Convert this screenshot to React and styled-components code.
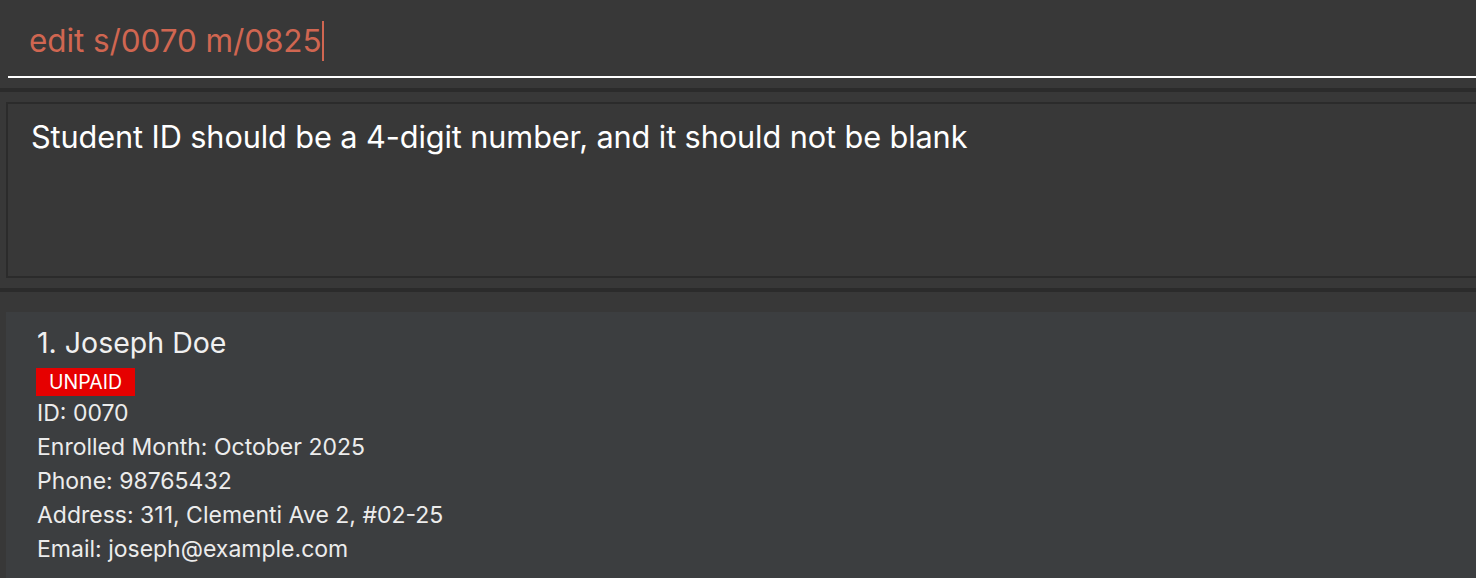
import React from 'react';
import styled, { createGlobalStyle } from 'styled-components';

const GlobalStyle = createGlobalStyle`
  html, body {
    margin: 0;
    height: 100%;
    overflow: hidden;
    background: #383838;
  }
  body {
    font-family: Inter, "Noto Sans", sans-serif;
  }
`;

const Window = styled.div`
  display: flex;
  flex-direction: column;
  height: 100vh;
`;

const CommandBox = styled.div`
  height: 88px;
  padding-left: 8px;
  box-sizing: border-box;
`;

const CommandInput = styled.div`
  height: 78px;
  box-sizing: border-box;
  border-bottom: 2px solid #ffffff;
  padding: 21px 0 0 21px;
  display: flex;
  align-items: flex-start;
  color: #d06651;
  font-size: 31.5px;
  line-height: 40px;
  letter-spacing: -0.1px;
`;

const Caret = styled.span`
  display: inline-block;
  width: 2px;
  height: 40px;
  margin-left: 1px;
  background: #d06651;
`;

const Divider = styled.div`
  height: 4px;
  flex-shrink: 0;
  background: #2b2b2b;
`;

const ResultPane = styled.div`
  height: 196px;
  box-sizing: border-box;
  padding: 10px 0 10px 6px;
`;

const ResultBox = styled.div`
  height: 100%;
  box-sizing: border-box;
  border: 2px solid #2b2b2b;
  border-right: none;
  padding: 13px 0 0 23px;
  color: #ffffff;
  font-size: 30.7px;
  line-height: 40px;
  letter-spacing: -0.1px;
`;

const ListPane = styled.div`
  flex: 1;
  padding: 20px 0 0 6px;
  overflow: hidden;
`;

const Card = styled.div`
  background: ${p => (p.$odd ? '#515658' : '#3c3e40')};
  padding: 14px 0 20px 31px;
  color: #ececec;
`;

const Name = styled.div`
  font-size: 28.5px;
  line-height: 34px;
  color: #f0f0f0;
`;

const Tag = styled.div`
  width: fit-content;
  margin: 8px 0 0 -1px;
  padding: 0 13px;
  height: 28px;
  line-height: 29px;
  font-size: 19.5px;
  color: #ffffff;
  background: ${p => (p.$paid ? '#2e8b57' : '#e60000')};
`;

const Detail = styled.div`
  font-size: 23px;
  line-height: 34px;
  letter-spacing: 0;
`;

const students = [
  {
    name: 'Joseph Doe',
    paid: false,
    id: '0070',
    month: 'October 2025',
    phone: '98765432',
    address: '311, Clementi Ave 2, #02-25',
    email: 'joseph@example.com',
  },
];

const App = () => (
  <>
    <GlobalStyle />
    <Window>
      <CommandBox>
        <CommandInput>
          edit s/0070 m/0825
          <Caret />
        </CommandInput>
      </CommandBox>
      <Divider />
      <ResultPane>
        <ResultBox>Student ID should be a 4-digit number, and it should not be blank</ResultBox>
      </ResultPane>
      <Divider />
      <ListPane>
        {students.map((s, i) => (
          <Card key={s.id} $odd={i % 2 === 1}>
            <Name>{i + 1}. {s.name}</Name>
            <Tag $paid={s.paid}>{s.paid ? 'PAID' : 'UNPAID'}</Tag>
            <Detail>ID: {s.id}</Detail>
            <Detail>Enrolled Month: {s.month}</Detail>
            <Detail>Phone: {s.phone}</Detail>
            <Detail>Address: {s.address}</Detail>
            <Detail>Email: {s.email}</Detail>
          </Card>
        ))}
      </ListPane>
    </Window>
  </>
);

export default App;
